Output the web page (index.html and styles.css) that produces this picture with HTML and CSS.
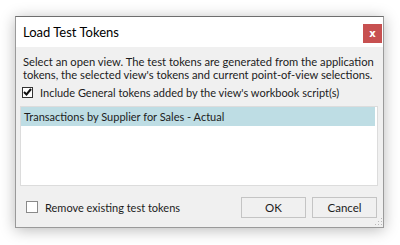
FILE: index.html
```html
<!DOCTYPE html>
<html lang="en">
<head>
    <meta charset="UTF-8">
    <title>Load Test Tokens</title>
    <link rel="stylesheet" href="styles.css">
</head>
<body>
    <div class="dialog">
        <div class="title-bar">
            <span class="title">Load Test Tokens</span>
            <button type="button" class="close-btn">x</button>
        </div>

        <div class="content">
            <p class="intro">Select an open view. The test tokens are generated from the application<br>tokens, the selected view's tokens and current point-of-view selections.</p>

            <label class="check-row">
                <span class="check checked">
                    <svg width="9" height="8" viewBox="0 0 9 8"><path d="M1 4 L3.5 6.5 L8 1" fill="none" stroke="#111" stroke-width="2"/></svg>
                </span>
                Include General tokens added by the view's workbook script(s)
            </label>

            <div class="view-list">
                <div class="view-item selected">Transactions by Supplier for Sales - Actual</div>
            </div>

            <div class="footer">
                <label class="check-row remove">
                    <span class="check"></span>
                    Remove existing test tokens
                </label>
                <div class="buttons">
                    <button type="button" class="btn">OK</button>
                    <button type="button" class="btn">Cancel</button>
                </div>
            </div>
        </div>
        <div class="grip"></div>
    </div>
</body>
</html>
```

FILE: styles.css
```css
* {
    margin: 0;
    padding: 0;
    box-sizing: border-box;
}

body {
    background: #fff;
    font-family: Lato, 'Open Sans', sans-serif;
    font-size: 11px;
    color: #1c1c1c;
    width: 400px;
    height: 245px;
    overflow: hidden;
    padding: 16px 0 0 15px;
}

.dialog {
    position: relative;
    width: 369px;
    height: 212px;
    background: #f0f0f0;
    border: 1px solid #9a9a9a;
    border-top-color: #6e6e6e;
    box-shadow: 0 2px 14px rgba(0, 0, 0, 0.28);
    display: flex;
    flex-direction: column;
    overflow: hidden;
}

.title-bar {
    height: 30px;
    flex: none;
    background: #fff;
    display: flex;
    align-items: flex-start;
    justify-content: space-between;
    padding: 0 1px 0 7px;
}

.title {
    font-size: 13px;
    line-height: 30px;
    color: #000;
}

.close-btn {
    margin-top: 7px;
    width: 19px;
    height: 19px;
    border: none;
    background: #c75050;
    color: #fff;
    font-family: 'DejaVu Sans', sans-serif;
    font-weight: bold;
    font-size: 10px;
    line-height: 17px;
}

.content {
    flex: 1;
    display: flex;
    flex-direction: column;
    padding: 8px 5px 0 4px;
}

.intro {
    padding-left: 3px;
    line-height: 13px;
    white-space: nowrap;
    font-size: 11.2px;
}

.check-row {
    display: flex;
    align-items: center;
    gap: 7px;
    height: 22px;
    margin-left: 2px;
    white-space: nowrap;
}

.check {
    flex: none;
    width: 11px;
    height: 11px;
    border: 1px solid #333;
    background: #fff;
    display: flex;
    align-items: center;
    justify-content: center;
}

.view-list {
    height: 80px;
    flex: none;
    background: #fff;
    border: 1px solid #dcdcdc;
    padding: 0 2px 0 0;
    margin-top: 3px;
}

.view-item {
    height: 19px;
    line-height: 19px;
    padding-left: 3px;
}

.view-item.selected {
    background: #bedde4;
}

.footer {
    display: flex;
    align-items: center;
    justify-content: space-between;
    padding: 10px 1px 0 6px;
}

.remove {
    margin: 0;
}

.remove .check {
    width: 12px;
    height: 12px;
    border-color: #8a8a8a;
}

.buttons {
    display: flex;
    gap: 6px;
}

.btn {
    width: 65px;
    height: 21px;
    border: 1px solid #c4c4c4;
    background: #f0f0f0;
    font-family: inherit;
    font-size: 11.5px;
    color: #1c1c1c;
}

.grip {
    position: absolute;
    right: 1px;
    bottom: 2px;
    width: 8px;
    height: 8px;
    background:
        radial-gradient(circle, #b8b8b8 1px, transparent 1px) 0 0 / 3px 3px;
    clip-path: polygon(100% 0, 100% 100%, 0 100%);
}
```
